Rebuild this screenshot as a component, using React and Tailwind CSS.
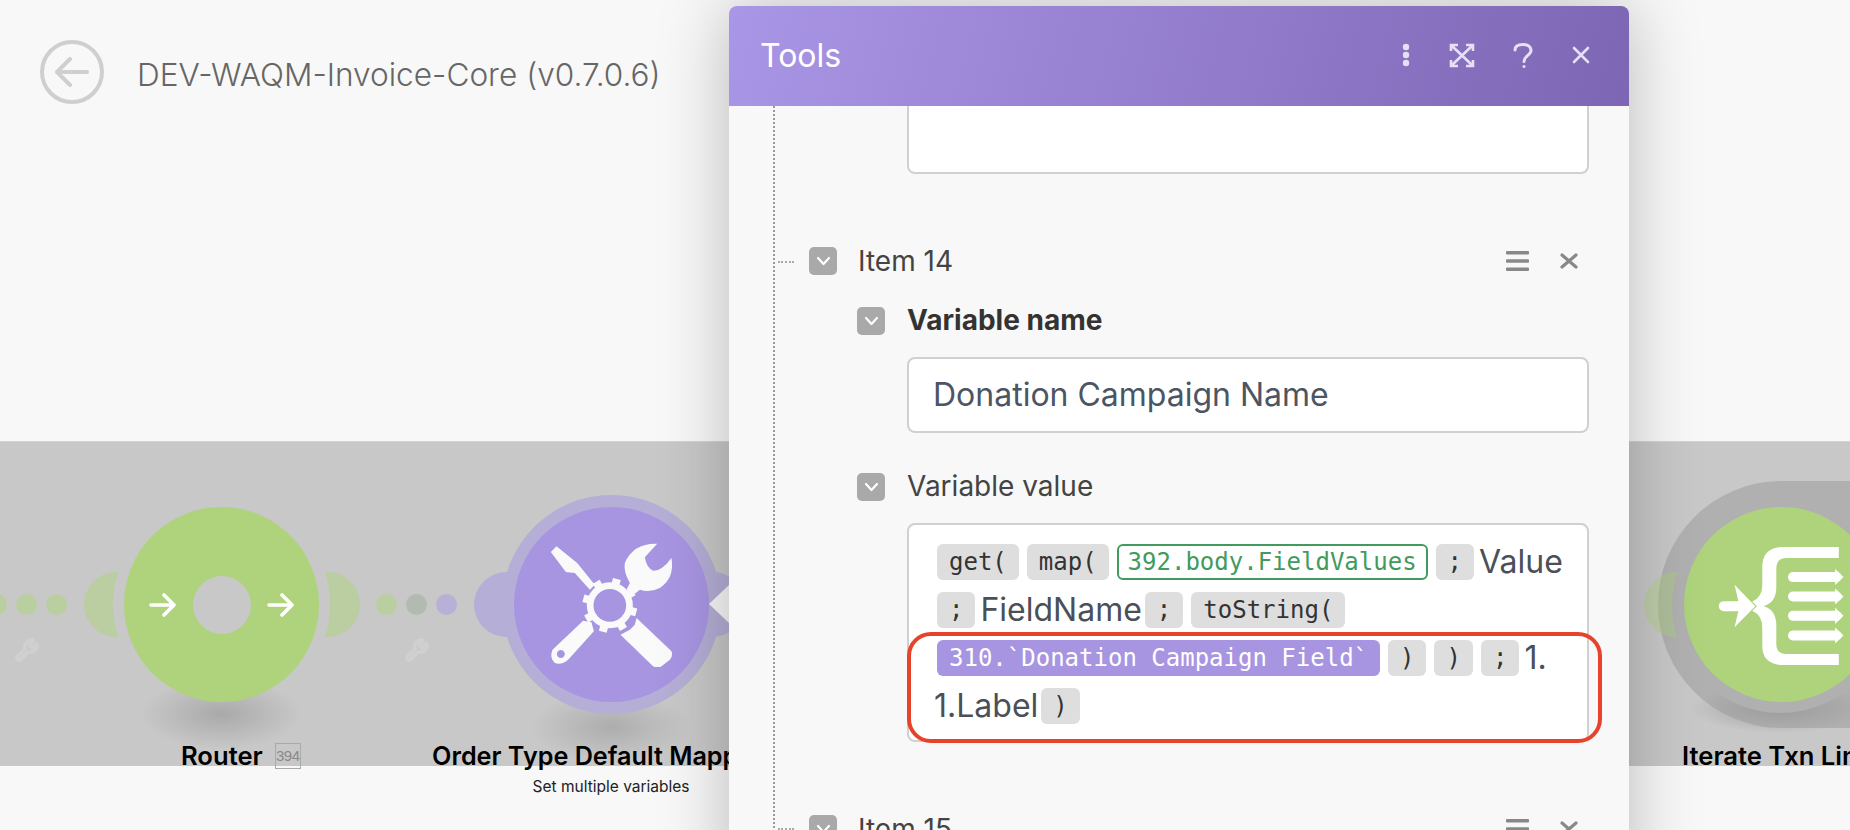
import React from "react";
import { Wrench } from "lucide-react";

const inter = "font-['Inter',sans-serif]";

/* ---------------- CHIPS ---------------- */
function Chip({ children, kind }) {
  const base = "h-[36px] shrink-0 rounded-[6px] px-[12px] flex items-center whitespace-pre font-['DejaVu_Sans_Mono',monospace] text-[24px]";
  if (kind === "green") return <span className={`${base} border-2 border-[#429a5d] bg-white text-[#429a5d] !px-[9px]`}>{children}</span>;
  if (kind === "purple") return <span className={`${base} bg-[#a895e2] text-white`}>{children}</span>;
  return <span className={`${base} bg-[#dedede] text-[#333]`}>{children}</span>;
}

function Txt({ children }) {
  return <span className="text-[32px] text-[#4b5058] -ml-[3px] -mr-[5px] whitespace-pre">{children}</span>;
}

function Dot({ color }) {
  return <div className={`w-[21px] h-[21px] rounded-full ${color}`} />;
}

/* ---------------- ICONS ---------------- */
function Check() {
  return (
    <div className="w-[28px] h-[28px] shrink-0 rounded-[5px] bg-[#a9a9a9] flex items-center justify-center">
      <svg width="15" height="10" viewBox="0 0 15 10" fill="none" stroke="#fff" strokeWidth="2.2" strokeLinecap="round" strokeLinejoin="round">
        <path d="M2 2l5.500 6L13 2" />
      </svg>
    </div>
  );
}

function RowActions() {
  return (
    <div className="ml-auto flex items-center gap-[31px] mr-[51px]">
      <svg width="23" height="20" viewBox="0 0 23 20" fill="#888"><rect width="23" height="3.4" rx="1" /><rect y="8.3" width="23" height="3.4" rx="1" /><rect y="16.6" width="23" height="3.4" rx="1" /></svg>
      <svg width="18" height="16" viewBox="0 0 18 16" fill="none" stroke="#888" strokeWidth="3.2" strokeLinecap="round"><path d="M2 2l14 12M16 2L2 14" /></svg>
    </div>
  );
}

function Arrow() {
  return (
    <svg width="28" height="24" viewBox="0 0 28 24" fill="none" stroke="#fff" strokeWidth="3.6" strokeLinecap="round" strokeLinejoin="round">
      <path d="M2 12h23M15 2l10 10-10 10" />
    </svg>
  );
}

function ToolsIcon() {
  const teeth = [15, 60, 105, 150, 195, 240, 285, 330];
  return (
    <svg width="127" height="124" viewBox="205 185 380 372" fill="#fafafa">
      <path d="M213 212L230 195L292 245L345 310L330 325L285 275L258 272Z" />
      <path fillRule="evenodd" d="M310 418L335 423L342 450L265 535Q245 552 225 545Q208 530 218 505ZM243 506a12 12 0 1 0 .01 0Z" />
      <path d="M532 187L495 228Q500 260 520 268Q545 270 575 230Q585 290 540 320Q510 335 480 325L465 337L440 325L450 305Q430 270 435 245Q460 185 532 187Z" />
      <path d="M470 410L575 510Q580 525 570 535L545 555Q530 565 515 550L422 460L450 445L465 430Z" />
      <circle cx="390" cy="372" r="59" fill="none" stroke="#fafafa" strokeWidth="20" />
      {teeth.map(a => <rect key={a} x="378" y="290" width="24" height="26" transform={`rotate(${a} 390 372)`} />)}
    </svg>
  );
}

function IteratorIcon() {
  const ys = [165, 223, 281, 340];
  return (
    <svg className="absolute left-[32px] top-[35px]" width="134" height="127" viewBox="230 60 400 380" fill="#fff">
      <path d="M253 252H305" stroke="#fff" strokeWidth="30" strokeLinecap="round" />
      <path d="M285 188L347 252L285 315L300 252Z" />
      <path d="M597 75H430Q368 75 368 135V190Q368 225 338 238L352 252L338 266Q368 280 368 315V370Q368 428 430 428H597V395H440Q410 395 410 365V310Q410 262 372 252Q410 242 410 195V140Q410 108 440 108H597Z" />
      {ys.map(y => (
        <g key={y}>
          <path d={`M460 ${y}H590`} stroke="#fff" strokeWidth="30" strokeLinecap="round" />
          <path d={`M586 ${y - 24}L611 ${y}L586 ${y + 24}Z`} />
        </g>
      ))}
    </svg>
  );
}

/* ---------------- APP ---------------- */
export default function App() {
  return (
    <div className={`relative h-[830px] w-[1850px] overflow-hidden bg-[#f8f8f8] ${inter}`}>

      {/* TOP BAR */}
      <div className="h-[441px] pl-[40px] pt-[40px] flex items-start gap-[33px]">
        <div className="w-[64px] h-[64px] rounded-full border-4 border-[#cfcfcf] flex items-center justify-center">
          <svg width="34" height="30" viewBox="0 0 34 30" fill="none" stroke="#cfcfcf" strokeWidth="4" strokeLinecap="round" strokeLinejoin="round">
            <path d="M32 15H3M15 2L2 15l13 13" />
          </svg>
        </div>
        <div className="text-[31.6px] leading-[70px] text-[#666] font-light whitespace-nowrap">DEV-WAQM-Invoice-Core (v0.7.0.6)</div>
      </div>

      {/* CANVAS */}
      <div className="relative h-[325px] bg-[#c8c8c8] shadow-[inset_0_1px_0_#d4d4d4]">
        {/* connector dots */}
        <div className="absolute left-[-14px] top-[153px] flex gap-[9px]">
          <Dot color="bg-[#b9cfa0]" /><Dot color="bg-[#b9cfa0]" /><Dot color="bg-[#b9cfa0]" />
        </div>
        <div className="absolute left-[376px] top-[153px] flex gap-[9px]">
          <Dot color="bg-[#b9cfa0]" /><Dot color="bg-[#b3bab1]" /><Dot color="bg-[#b8b0d6]" />
        </div>
        <Wrench className="absolute left-[15px] top-[197px] text-[#d0d0d0]" size={24} strokeWidth={3.6} />
        <Wrench className="absolute left-[405px] top-[197px] text-[#d0d0d0]" size={24} strokeWidth={3.6} />

        {/* router */}
        <div className="absolute left-[84px] top-[131px] w-[276px] flex justify-between">
          <div className="w-[65px] h-[65px] rounded-full bg-[#acd37b]/50" />
          <div className="w-[65px] h-[65px] rounded-full bg-[#acd37b]/50" />
        </div>
        <div className="absolute left-[113px] top-[55px] w-[217px] h-[217px] rounded-full bg-[#c8c8c8]" />
        <div className="absolute left-[141px] top-[238px] w-[160px] h-[70px] bg-[radial-gradient(closest-side,#a9a9a9,transparent)]" />
        <div className="absolute left-[124px] top-[66px] w-[195px] h-[195px] rounded-full bg-[#aed37c] flex items-center justify-center gap-[16px]">
          <Arrow />
          <div className="w-[58px] h-[58px] rounded-full bg-[#c8c8c8]" />
          <Arrow />
        </div>
        <div className="absolute left-[181px] top-[300px] flex items-start gap-[12px]">
          <div className="text-[25.6px] leading-[30px] font-semibold text-black">Router</div>
          <div className="w-[26px] h-[26px] mt-[2px] border border-[#aaa] flex items-center justify-center font-['Liberation_Sans',sans-serif] text-[15px] tracking-[-0.5px] text-[#8a8a8a]">394</div>
        </div>

        {/* tools module */}
        <div className="absolute left-[474px] top-[131px] w-[271px] flex justify-between">
          <div className="w-[65px] h-[65px] rounded-full bg-[#b5aed6]" />
          <div className="w-[65px] h-[65px] rounded-full bg-[#b5aed6]" />
        </div>
        <div className="absolute left-[531px] top-[251px] w-[160px] h-[70px] bg-[radial-gradient(closest-side,#adadad,transparent)]" />
        <div className="absolute left-[502px] top-[54px] w-[219px] h-[219px] rounded-full bg-[#b5aed6] flex items-center justify-center">
          <div className="w-[195px] h-[195px] rounded-full bg-[#a895e2] flex items-center justify-center">
            <ToolsIcon />
          </div>
        </div>
        <div className="absolute left-[261px] top-[300px] w-[700px] flex flex-col items-center">
          <div className="text-[25.2px] leading-[30px] font-semibold text-black whitespace-nowrap">Order Type Default Mappings</div>
          <div className="mt-[6px] text-[15.5px] leading-[20px] text-[#222]">Set multiple variables</div>
        </div>
        <div className="absolute left-[709px] top-[144px] w-0 h-0 border-y-[19px] border-y-transparent border-r-[20px] border-r-[#f8f8f8]" />

        {/* iterator */}
        <div className="absolute left-[1658px] top-[40px] w-[260px] h-[247px] rounded-l-full bg-[#b0b0b0]" />
        <div className="absolute left-[1690px] top-[242px] w-[180px] h-[50px] bg-[radial-gradient(closest-side,#9c9c9c,transparent)]" />
        <div className="absolute left-[1644px] top-[131px] w-[65px] h-[65px] rounded-full bg-[#acd37b]/40" />
        <div className="absolute left-[1672px] top-[55px] w-[217px] h-[217px] rounded-full bg-[#b0b0b0]" />
        <div className="absolute left-[1684px] top-[66px] w-[195px] h-[195px] rounded-full bg-[#aed37c]">
          <IteratorIcon />
        </div>
        <div className="absolute left-[1682px] top-[300px] text-[25.6px] leading-[30px] font-semibold text-black whitespace-nowrap">Iterate Txn Lines</div>
      </div>

      {/* TOOLS PANEL */}
      <div className="absolute left-[729px] top-[6px] w-[900px] h-[900px] rounded-t-[8px] bg-[#f8f8f8] shadow-[0_0_70px_rgba(0,0,0,0.25)] flex flex-col">
        <div className="h-[100px] shrink-0 rounded-t-[8px] bg-[linear-gradient(105deg,#aa96e6,#7d66b4)] flex items-center pl-[31px] pr-[39px] pb-[2px]">
          <div className="text-[32px] text-white pt-[2px]">Tools</div>
          <div className="ml-auto flex items-center text-[#e6e0f5]">
            <svg width="8" height="24" viewBox="0 0 8 24" fill="currentColor"><circle cx="4" cy="4" r="3.2" /><circle cx="4" cy="12" r="3.2" /><circle cx="4" cy="20" r="3.2" /></svg>
            <svg className="ml-[39px]" width="26" height="25" viewBox="0 0 26 25" fill="none" stroke="currentColor" strokeWidth="2.6">
              <path d="M2 8V2h7M17 2h7v6M24 17v6h-7M9 23H2v-6M3 3l20 19M23 3L3 22" />
            </svg>
            <svg className="ml-[38px]" width="20" height="25" viewBox="0 0 20 25" fill="none" stroke="currentColor" strokeWidth="3" strokeLinecap="round">
              <path d="M2 7c0-4 3.500-5.500 8-5.500s8 2 8 6c0 5-7 5-7 11" /><path d="M11 23.500v.01" />
            </svg>
            <svg className="ml-[39px]" width="18" height="18" viewBox="0 0 18 18" fill="none" stroke="currentColor" strokeWidth="2.6" strokeLinecap="round"><path d="M2 2l14 14M16 2L2 16" /></svg>
          </div>
        </div>

        <div className="relative flex-1 pl-[80px]">
          {/* tree line */}
          <div className="absolute left-[44px] top-0 h-[730px] border-l-2 border-dotted border-[#999]" />
          <div className="absolute left-[49px] top-[155px] w-[16px] border-t-2 border-dotted border-[#aaa]" />
          <div className="absolute left-[49px] top-[722px] w-[16px] border-t-2 border-dotted border-[#aaa]" />

          {/* previous item's field */}
          <div className="ml-[98px] w-[682px] h-[68px] bg-white border-2 border-t-0 border-[#d0d0d0] rounded-b-[8px]" />

          {/* item 14 */}
          <div className="mt-[73px] flex items-center h-[28px] gap-[21px]">
            <Check />
            <div className="text-[28px] text-[#444]">Item 14</div>
            <RowActions />
          </div>

          <div className="mt-[32px] ml-[48px] flex items-center h-[28px] gap-[22px]">
            <Check />
            <div className="text-[28px] font-bold text-[#333] -mt-[2px]">Variable name</div>
          </div>
          <div className="mt-[22px] ml-[98px] w-[682px] h-[76px] bg-white border-2 border-[#d0d0d0] rounded-[8px] flex items-center pl-[24px] text-[32px] text-[#4b5563]">
            Donation Campaign Name
          </div>

          <div className="mt-[40px] ml-[48px] flex items-center h-[28px] gap-[22px]">
            <Check />
            <div className="text-[28px] text-[#444] -mt-[2px]">Variable value</div>
          </div>
          <div className="relative mt-[22px] ml-[98px] w-[682px] h-[219px] bg-white border-2 border-[#d0d0d0] rounded-[8px] pl-[28px] pt-[13px]">
            <div className="h-[48px] flex items-center gap-[8px]">
              <Chip>get(</Chip><Chip>map(</Chip><Chip kind="green">392.body.FieldValues</Chip><Chip>;</Chip><Txt>Value</Txt>
            </div>
            <div className="h-[48px] flex items-center gap-[8px]">
              <Chip>;</Chip><Txt>FieldName</Txt><Chip>;</Chip><Chip>toString(</Chip>
            </div>
            <div className="h-[48px] flex items-center gap-[8px]">
              <Chip kind="purple">310.`Donation Campaign Field`</Chip><Chip>)</Chip><Chip>)</Chip><Chip>;</Chip><Txt>1.</Txt>
            </div>
            <div className="h-[48px] flex items-center gap-[8px]">
              <Txt>1.Label</Txt><Chip>)</Chip>
            </div>
            {/* red annotation */}
            <div className="absolute -left-[2px] top-[107px] w-[695px] h-[111px] rounded-[24px] border-[4px] border-[#e8432a]" />
          </div>

          {/* item 15 */}
          <div className="mt-[73px] flex items-center h-[28px] gap-[21px]">
            <Check />
            <div className="text-[28px] text-[#444]">Item 15</div>
            <RowActions />
          </div>
        </div>
      </div>
    </div>
  );
}
